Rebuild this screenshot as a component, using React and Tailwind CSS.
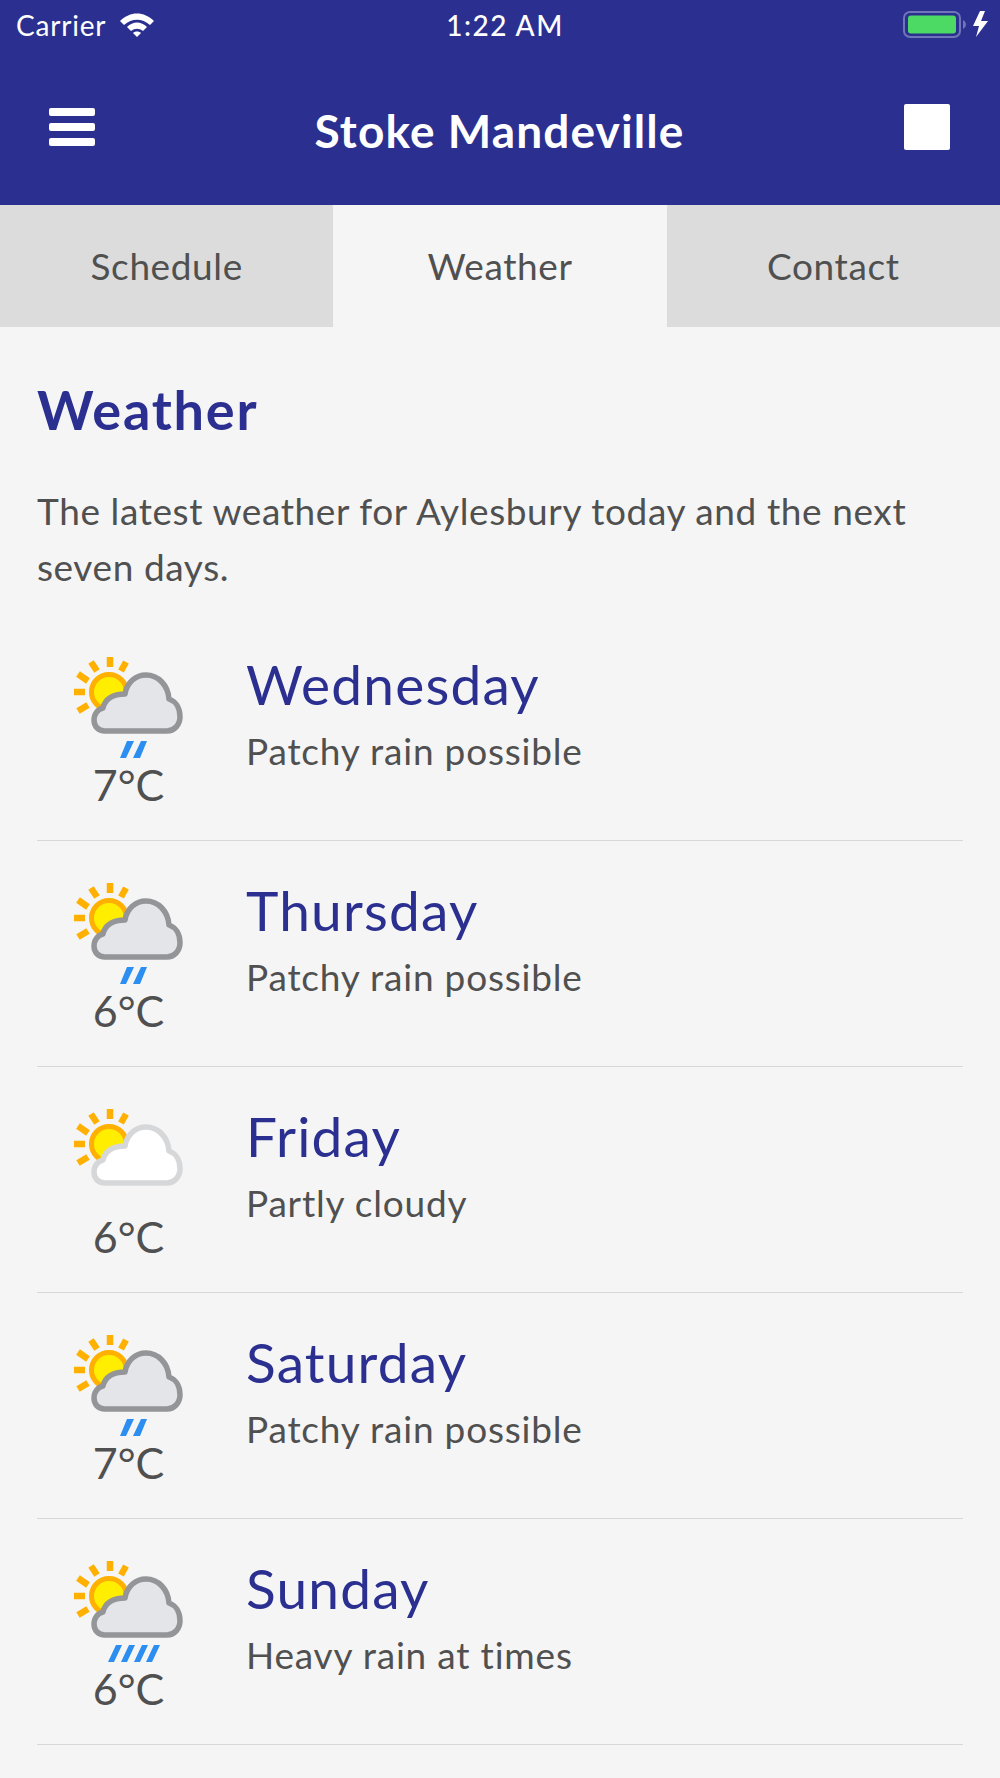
const days = [
  { day: "Wednesday", text: "Patchy rain possible", temp: "7°C", rain: 2 },
  { day: "Thursday", text: "Patchy rain possible", temp: "6°C", rain: 2 },
  { day: "Friday", text: "Partly cloudy", temp: "6°C", rain: 0 },
  { day: "Saturday", text: "Patchy rain possible", temp: "7°C", rain: 2 },
  { day: "Sunday", text: "Heavy rain at times", temp: "6°C", rain: 4 },
];

const WeatherIcon = ({ rain }) => {
  const dry = rain === 0;
  return (
    <svg width="160" height="110" viewBox="0 15 160 110" className="block">
      <g stroke="#ffb000" strokeWidth="6.5">
        <path d="M60 18V28M76 23L71 32M47 32L41 23M38 42L28 35M35 53H24M38 66L28 72" />
      </g>
      <circle cx="59" cy="53" r="17.5" fill="#ffee00" stroke="#ffb000" strokeWidth="5" />
      <path
        d="M55 92C48 92 44 87 44 81C44 75 48 70 53 69C55 60 63 55 75 55C77 43 86 36 96 36C108 36 118 46 119 60C125 62 130 68 130 78C130 86 124 92 117 92Z"
        fill={dry ? "#ffffff" : "#e3e5e8"}
        stroke={dry ? "#d6d7d9" : "#939598"}
        strokeWidth="5.5"
        strokeLinejoin="round"
      />
      {rain === 2 && (
        <path d="M77 102H84L76 119H70ZM91 102H97L90 119H83Z" fill="#2b8ef0" />
      )}
      {rain === 4 && (
        <path d="M66 102H72L64 119H58ZM79 102H85L77 119H71ZM92 102H98L90 119H84ZM104 102H110L102 119H96Z" fill="#2b8ef0" />
      )}
    </svg>
  );
};

const StatusBar = () => (
  <div className="relative flex h-[49px] items-center justify-between pl-4 pr-3 text-white">
    <div className="flex items-center gap-[14px]">
      <span className="text-[28px] leading-none tracking-[0.8px]">Carrier</span>
      <svg width="34" height="24" viewBox="0 0 34 24">
        <path d="M0 8C10 -2 24 -2 34 8L30 12C22 5 12 5 4 12Z" fill="#fff" />
        <path d="M7 14C13 8 21 8 27 14L23 18C19 15 15 15 11 18Z" fill="#fff" />
        <path d="M13 20C15 18 19 18 21 20L17 24Z" fill="#fff" />
      </svg>
    </div>
    <span className="absolute left-[10px] right-0 text-center text-[28px] font-medium leading-none tracking-[1.5px]">1:22 AM</span>
    <svg width="85" height="27" viewBox="0 0 85 27">
      <rect x="1" y="1" width="56" height="25" rx="6" fill="none" stroke="#7074b8" strokeWidth="2" />
      <rect x="5" y="4.5" width="48" height="18" rx="3" fill="#4cd964" />
      <path d="M60 9C62 10 63 12 63 13.5C63 15 62 17 60 18Z" fill="#7074b8" />
      <path d="M77 0L70 15H76L73 26L85 10H78L82 0Z" fill="#fff" />
    </svg>
  </div>
);

const App = () => {
  return (
    <div className="flex min-h-[1778px] w-[1000px] flex-col bg-[#f5f5f5] font-['Lato',sans-serif] text-[#505050]">
      <header className="h-[205px] bg-[#2b3090]">
        <StatusBar />
        <div className="flex items-center justify-between pl-[49px] pr-[50px] pt-[50px]">
          <div className="flex w-[46px] flex-col gap-[7px]">
            <div className="h-[8px] rounded-[2px] bg-white" />
            <div className="h-[8px] rounded-[2px] bg-white" />
            <div className="h-[8px] rounded-[2px] bg-white" />
          </div>
          <h1 className="mt-[9px] text-[46px] font-bold leading-none tracking-[1.1px] text-white">Stoke Mandeville</h1>
          <div className="h-[46px] w-[46px] rounded-[2px] bg-white" />
        </div>
      </header>

      <nav className="grid h-[122px] grid-cols-3 text-center text-[37px] tracking-[0.6px]">
        <div className="flex items-center justify-center bg-[#dcdcdc]">Schedule</div>
        <div className="flex items-center justify-center">Weather</div>
        <div className="flex items-center justify-center bg-[#dcdcdc]">Contact</div>
      </nav>

      <main className="px-[37px] pt-[52px]">
        <h2 className="text-[54px] font-bold leading-[62px] tracking-[1.8px] text-[#2b3090]">Weather</h2>
        <p className="mt-[42px] text-[37px] leading-[56px] tracking-[0.6px]">
          The latest weather for Aylesbury today and the next seven days.
        </p>

        <div className="mt-[20px]">
          {days.map((d) => (
            <div key={d.day} className="flex h-[226px] border-b border-[#d8d8d8]">
              <div className="mr-[26px] flex w-[183px] flex-col items-center">
                <div className="ml-[3px] mt-[39px] h-[106px] w-[160px]">
                  <WeatherIcon rain={d.rain} />
                </div>
                <span className="text-[43px] leading-[50px]">{d.temp}</span>
              </div>
              <div className="pt-[36px]">
                <div className="text-[55px] leading-[66px] tracking-[1.2px] text-[#2b3090]">{d.day}</div>
                <div className="mt-[9px] text-[37px] leading-[50px] tracking-[0.8px]">{d.text}</div>
              </div>
            </div>
          ))}
        </div>
      </main>
    </div>
  );
};

export default App;
